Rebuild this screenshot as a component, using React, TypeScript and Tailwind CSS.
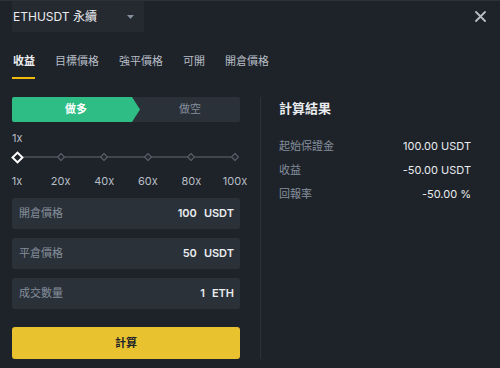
import React from "react";

const marks = ["1x", "20x", "40x", "60x", "80x", "100x"];

export default function App() {
  return (
    <div
      className="w-[500px] h-[368px] bg-[#1e2329] text-[#eaecef] overflow-hidden border-t border-[#2b3139] flex flex-col"
      style={{ fontFamily: 'Inter, "Noto Sans CJK TC", sans-serif' }}
    >
      {/* header */}
      <div className="flex items-start justify-between pl-[12px] pr-[14px] h-[31px]">
        <div className="w-[132px] h-[31px] bg-[#252a31] flex items-center justify-between pl-[1px] pr-[10px]">
          <span className="text-[12px] text-[#eaecef]">ETHUSDT 永續</span>
          <svg width="7" height="4" viewBox="0 0 7 4"><path d="M0 0h7L3.5 4z" fill="#848e9c" /></svg>
        </div>
        <svg className="mt-[10px]" width="11" height="11" viewBox="0 0 11 11">
          <path d="M1 1l9 9M10 1l-9 9" stroke="#b7bdc6" strokeWidth="1.8" strokeLinecap="round" />
        </svg>
      </div>

      {/* tabs */}
      <div className="flex gap-[20px] pl-[13px] mt-[21px] text-[11px] text-[#b7bdc6]">
        <div className="flex flex-col items-start">
          <span className="text-[#eaecef] font-bold leading-[16px]">收益</span>
          <div className="w-[23px] h-[2px] bg-[#f0b90b] mt-[8px] -ml-[1px]" />
        </div>
        <span className="leading-[16px]">目標價格</span>
        <span className="leading-[16px]">強平價格</span>
        <span className="leading-[16px]">可開</span>
        <span className="leading-[16px]">開倉價格</span>
      </div>

      {/* body */}
      <div className="flex mt-[18px] pl-[12px]">
        {/* left */}
        <div className="w-[228px] flex flex-col">
          <div className="h-[25px] flex bg-[#2b3139] rounded-[2px] text-[11px]">
            <div className="w-[128px] bg-[#2ebd85] text-white font-bold flex items-center justify-center rounded-l-[2px] [clip-path:polygon(0_0,calc(100%-8px)_0,100%_50%,calc(100%-8px)_100%,0_100%)]">
              做多
            </div>
            <div className="flex-1 flex items-center justify-center text-[#848e9c]">做空</div>
          </div>

          <div className="text-[11px] text-[#b7bdc6] mt-[9px] leading-[14px]">1x</div>

          <div className="relative h-[14px] mt-[5px]">
            <div className="absolute left-[5px] right-[5px] top-[6px] h-[2px] bg-[#40464f]" />
            <div className="relative flex justify-between h-full">
              {marks.map((m, i) => (
                <div key={m} className="w-[10px] h-full flex items-center justify-center">
                  {i === 0 ? (
                    <div className="w-[9px] h-[9px] rotate-45 border-2 border-white bg-[#1e2329]" />
                  ) : (
                    <div className="w-[6px] h-[6px] rotate-45 border border-[#5e6673] bg-[#24292f]" />
                  )}
                </div>
              ))}
            </div>
          </div>

          <div className="flex justify-between mt-[10px] text-[11px] text-[#b7bdc6] leading-[14px]">
            {marks.map((m) => (
              <div key={m} className="w-[10px] flex justify-center whitespace-nowrap">{m}</div>
            ))}
          </div>

          <div className="flex flex-col gap-[9px] mt-[10px]">
            {[
              ["開倉價格", "100", "USDT"],
              ["平倉價格", "50", "USDT"],
              ["成交數量", "1", "ETH"],
            ].map(([l, v, u]) => (
              <div key={l} className="h-[31px] bg-[#2b3139] rounded-[3px] flex items-center justify-between pl-[7px] pr-[6px] text-[11px]">
                <span className="text-[#848e9c]">{l}</span>
                <span className="text-[#eaecef] font-semibold">
                  {v}<span className="ml-[7px]">{u}</span>
                </span>
              </div>
            ))}
          </div>

          <button className="mt-[18px] h-[32px] rounded-[3px] bg-[#e9c32f] text-[#1e2329] text-[11px] font-bold flex items-center justify-center">
            計算
          </button>
        </div>

        {/* divider */}
        <div className="w-[1px] bg-[#2b3139] ml-[20px]" />

        {/* right */}
        <div className="w-[192px] ml-[18px] flex flex-col text-[11px]">
          <div className="text-[13px] font-bold text-[#eaecef] mt-[2px] leading-[18px]">計算結果</div>
          <div className="flex flex-col gap-[10px] mt-[22px]">
            {[
              ["起始保證金", "100.00 USDT"],
              ["收益", "-50.00 USDT"],
              ["回報率", "-50.00 %"],
            ].map(([l, v]) => (
              <div key={l} className="flex justify-between leading-[14px]">
                <span className="text-[#848e9c]">{l}</span>
                <span className="text-[#eaecef]">{v}</span>
              </div>
            ))}
          </div>
        </div>
      </div>
    </div>
  );
}
